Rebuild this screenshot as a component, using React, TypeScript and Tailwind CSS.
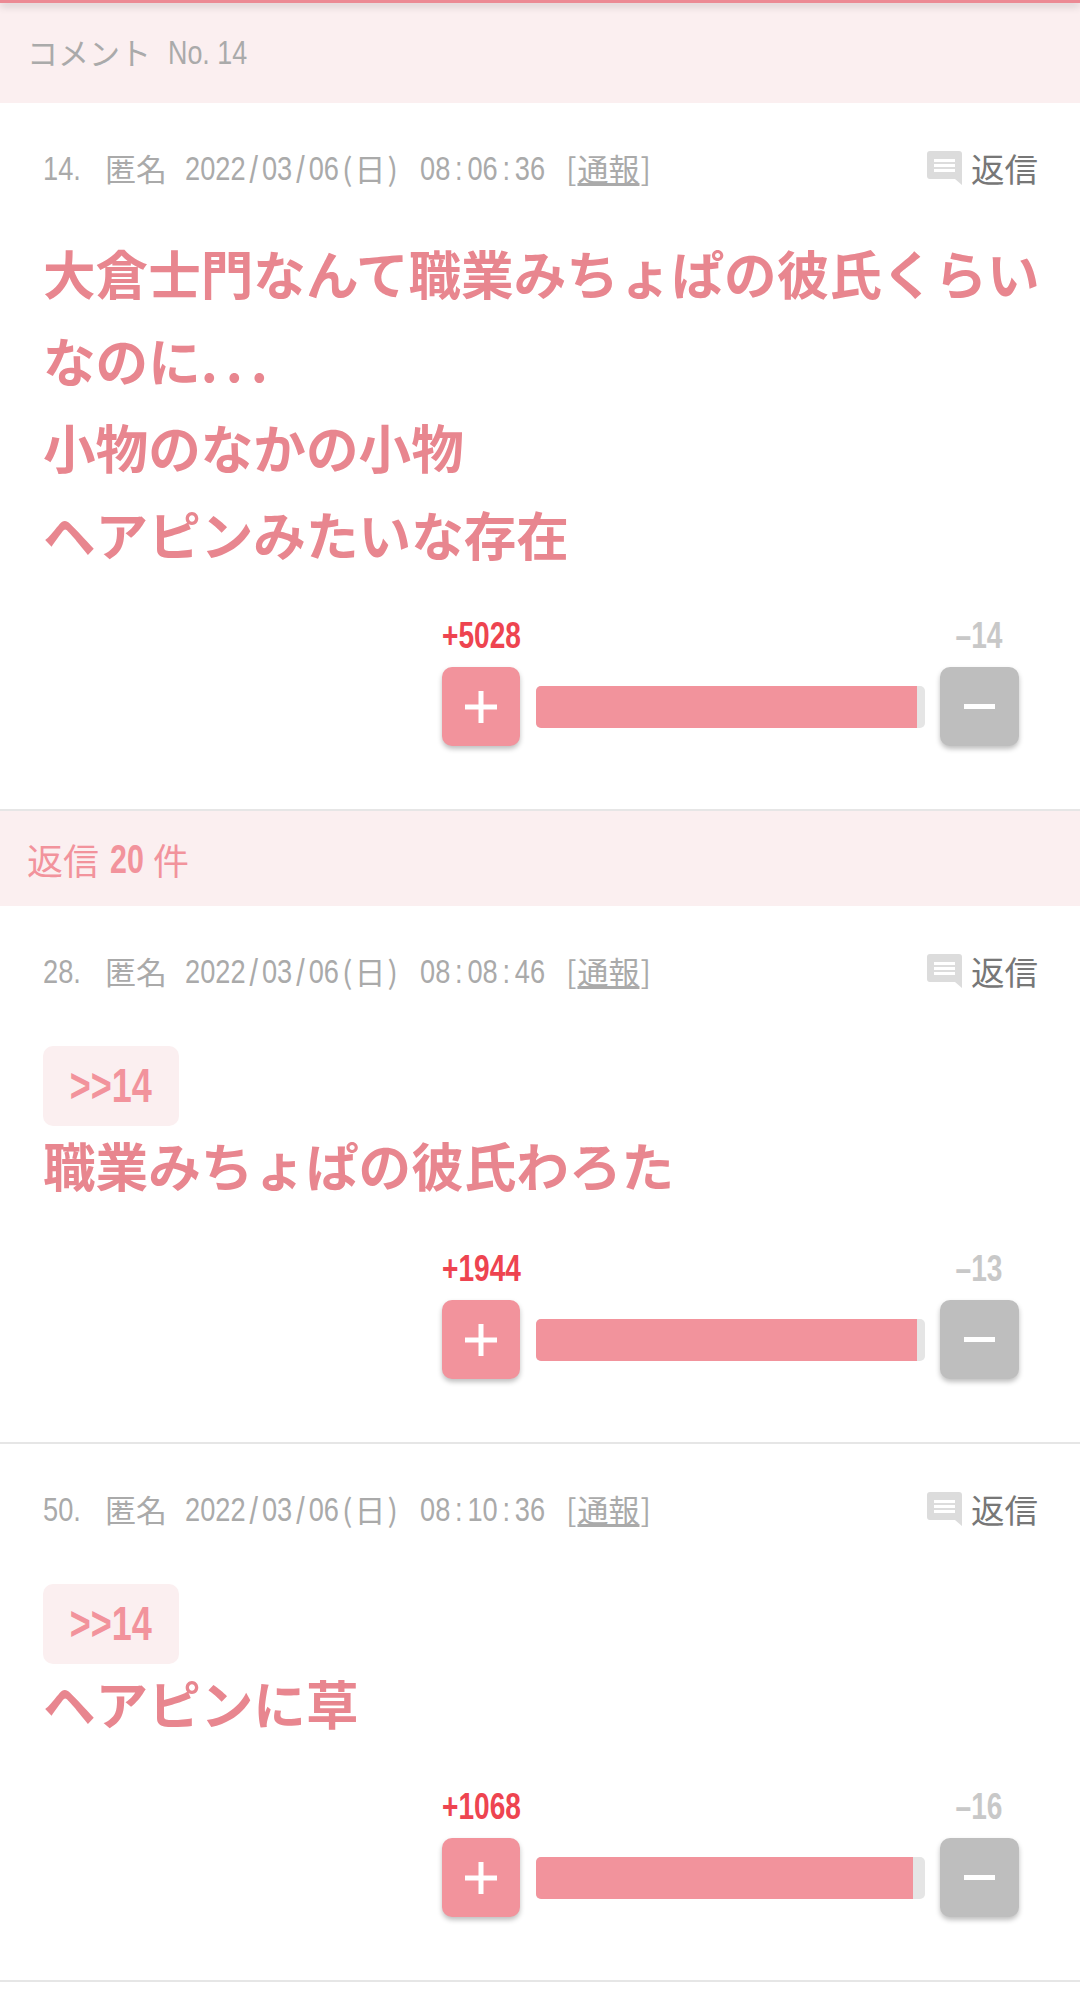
import React from "react";

const jp = "font-['Noto_Sans_CJK_JP',sans-serif]";
const latin = "font-['Liberation_Sans',sans-serif]";
// the site's latin face is a tall condensed one, so squeeze Liberation Sans sideways
const squeeze = `${latin} inline-block origin-left whitespace-nowrap scale-x-[0.8]`;

type Comment = {
  no: string;
  time: string;
  text: string;
  plus: string;
  minus: string;
  fill: string;
};

const comments: Comment[] = [
  { no: "28.", time: "08:08:46", text: "職業みちょぱの彼氏わろた", plus: "+1944", minus: "–13", fill: "w-[381px]" },
  { no: "50.", time: "08:10:36", text: "ヘアピンに草", plus: "+1068", minus: "–16", fill: "w-[377px]" },
];

// digits sit tight, the / and : separators get extra room
const Spaced = ({ text }: { text: string }) => (
  <>
    {text.split(/([/:])/).map((part, i) =>
      part === "/" ? (
        <span key={i} className="mx-[5px] align-[-3px] text-[38px] leading-none">
          {part}
        </span>
      ) : part === ":" ? (
        <span key={i} className="mx-[6px]">
          {part}
        </span>
      ) : (
        <span key={i}>{part}</span>
      )
    )}
  </>
);

const ReplyIcon = () => (
  <svg width="35" height="34" viewBox="0 0 35 34" className="mr-[9px]">
    <path d="M3 0h29a3 3 0 0 1 3 3v31l-7-6H3a3 3 0 0 1-3-3V3a3 3 0 0 1 3-3z" fill="#dcdcdc" />
    <path d="M7 8h21v3H7zM7 13h21v3H7zM7 18h21v3H7z" fill="#fff" />
  </svg>
);

const Meta = ({ no, time }: { no: string; time: string }) => (
  <div className="flex h-10 items-center justify-between">
    <div className="flex items-center text-[#aaaaaa]">
      <span className="w-[62px] text-[34px]">
        <span className={squeeze}>{no}</span>
      </span>
      <span className={`${jp} w-[80px] text-[31px]`}>匿名</span>
      <span className="w-[160px] text-[34px]">
        <span className={squeeze}>
          <Spaced text="2022/03/06" />
        </span>
      </span>
      <span className={`${jp} -ml-[3px] w-[78px] text-[31px] tracking-[2px]`}>(日)</span>
      <span className="w-[146px] text-[34px]">
        <span className={squeeze}>
          <Spaced text={time} />
        </span>
      </span>
      <span className={`${jp} text-[31px]`}>
        [<span className="mx-[1px] underline">通報</span>]
      </span>
    </div>
    <div className="flex items-center">
      <ReplyIcon />
      <span className={`${jp} text-[33.5px] text-[#777777]`}>返信</span>
    </div>
  </div>
);

const Votes = ({ plus, minus, fill }: { plus: string; minus: string; fill: string }) => (
  <div className="ml-[399px]">
    <div className={`${latin} flex h-10 items-center text-[36px] font-bold`}>
      <span className="w-[78px] whitespace-nowrap text-[#ee4450]">
        <span className="inline-block origin-left scale-x-[0.78]">{plus}</span>
      </span>
      <span className="ml-[420px] w-[79px] text-center text-[#c8c8c8]">
        <span className="inline-block scale-x-[0.78]">{minus}</span>
      </span>
    </div>
    <div className="mt-[11px] flex h-[79px] items-center">
      <div className="flex h-full w-[78px] items-center justify-center rounded-[10px] bg-[#f2939c] shadow-[0_3px_5px_rgba(0,0,0,0.25)]">
        <svg width="32" height="32" viewBox="0 0 32 32">
          <path d="M13.5 0h5v32h-5zM0 13.5h32v5H0z" fill="#fff" />
        </svg>
      </div>
      <div className="ml-4 mr-[15px] h-[42px] w-[389px] overflow-hidden rounded-[5px] bg-[#e5e5e5]">
        <div className={`h-full bg-[#f2939c] ${fill}`} />
      </div>
      <div className="flex h-full w-[79px] items-center justify-center rounded-[10px] bg-[#bebebe] shadow-[0_3px_5px_rgba(0,0,0,0.25)]">
        <div className="h-[5px] w-[31px] bg-white" />
      </div>
    </div>
  </div>
);

export default function App() {
  return (
    <div className="min-h-[2001px] overflow-hidden bg-white">
      <div className="h-[103px] bg-[#fbeff0]">
        <div className="h-[3px] bg-[#ec8a94] shadow-[0_2px_8px_rgba(0,0,0,0.3)]" />
        <div className="flex h-[98px] items-center pl-[27px] text-[#aaaaaa]">
          <span className={`${jp} w-[141px] text-[31px]`}>コメント</span>
          <span className="text-[34px]">
            <span className={`${squeeze} scale-x-[0.79]`}>No. 14</span>
          </span>
        </div>
      </div>

      {/* main comment */}
      <div className="border-b-2 border-[#e6e6e6] pl-[43px] pr-[42px] pt-[45px] pb-[63px]">
        <Meta no="14." time="08:06:36" />
        <div className={`${jp} mt-[41px] whitespace-nowrap text-[52.6px] font-bold leading-[87px] text-[#e8868f]`}>
          <div>大倉士門なんて職業みちょぱの彼氏くらい</div>
          <div>
            なのに<span className="tracking-[-2px]">. . .</span>
          </div>
          <div>小物のなかの小物</div>
          <div>ヘアピンみたいな存在</div>
        </div>
        <div className="mt-[39px]">
          <Votes plus="+5028" minus="–14" fill="w-[381px]" />
        </div>
      </div>

      <div className="flex h-[95px] items-center bg-[#fbeff0] pl-[27px] text-[#f2939c]">
        <span className={`${jp} text-[36px]`}>返信</span>
        <span className={`${latin} ml-[11px] w-[43px] text-[40px] font-bold`}>
          <span className="inline-block origin-left scale-x-[0.76]">20</span>
        </span>
        <span className={`${jp} text-[36px]`}>件</span>
      </div>

      {comments.map((c) => (
        <div key={c.no} className="border-b-2 border-[#e6e6e6] pl-[43px] pr-[42px] pt-[45px] pb-[63px]">
          <Meta no={c.no} time={c.time} />
          <div className={`${latin} mt-[55px] flex h-20 w-[136px] items-center justify-center rounded-[10px] bg-[#fbeff0] text-[48px] font-bold text-[#f2939c]`}>
            <span className="inline-block scale-x-[0.75]">&gt;&gt;14</span>
          </div>
          <div className={`${jp} -mt-[5px] text-[52.6px] font-bold leading-[87px] text-[#e8868f]`}>{c.text}</div>
          <div className="mt-[41px]">
            <Votes plus={c.plus} minus={c.minus} fill={c.fill} />
          </div>
        </div>
      ))}
    </div>
  );
}
